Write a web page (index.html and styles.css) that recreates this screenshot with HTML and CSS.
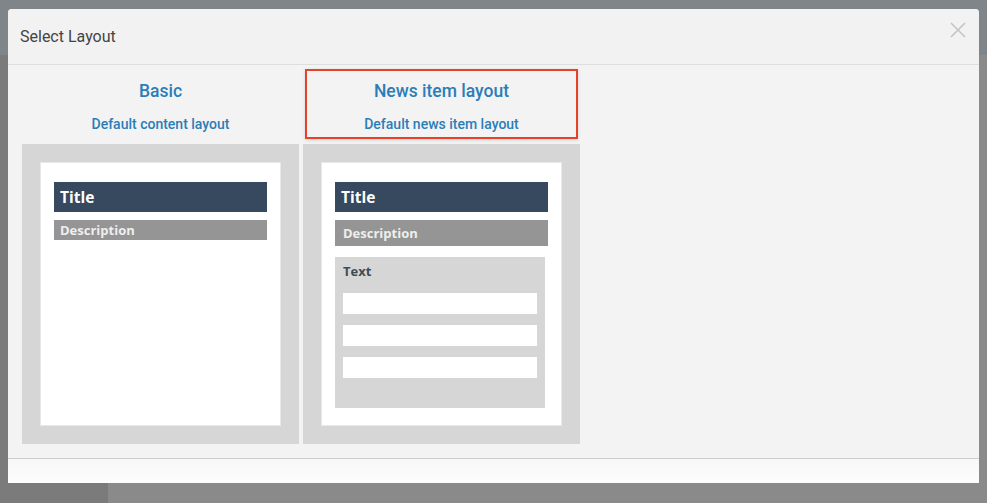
FILE: index.html
```html
<!DOCTYPE html>
<html>
  <head>
    <title>Select Layout</title>
    <meta charset="UTF-8" />
    <link rel="stylesheet" href="styles.css">
  </head>
  <body>
    <div class="backdrop">
      <div class="topbar"></div>
      <div class="sidebar"></div>
      <div class="content"></div>
    </div>

    <div class="modal">
      <div class="modal-header">
        <h3>Select Layout</h3>
        <span class="close">
          <svg width="16" height="16" viewBox="0 0 16 16">
            <path d="M1 1 L15 15 M15 1 L1 15" stroke="#c4c4c4" stroke-width="1.6" fill="none" />
          </svg>
        </span>
      </div>

      <div class="modal-body">
        <div class="layout-card">
          <div class="card-head">
            <div class="card-title">Basic</div>
            <div class="card-sub">Default content layout</div>
          </div>
          <div class="preview">
            <div class="sheet">
              <div class="bar-title">Title</div>
              <div class="bar-desc">Description</div>
            </div>
          </div>
        </div>

        <div class="layout-card">
          <div class="card-head selected">
            <div class="card-title">News item layout</div>
            <div class="card-sub">Default news item layout</div>
          </div>
          <div class="preview">
            <div class="sheet">
              <div class="bar-title">Title</div>
              <div class="bar-desc tall">Description</div>
              <div class="text-box">
                <div class="text-label">Text</div>
                <div class="field"></div>
                <div class="field"></div>
                <div class="field"></div>
              </div>
            </div>
          </div>
        </div>
      </div>

      <div class="modal-footer"></div>
    </div>
  </body>
</html>
```

FILE: styles.css
```css
html,
body {
  margin: 0;
  height: 100%;
  overflow: hidden;
}

body {
  font-family: Roboto, "Liberation Sans", sans-serif;
  background: #8a8a8a;
}

.backdrop {
  display: grid;
  grid-template-columns: 108px 1fr;
  grid-template-rows: 55px 1fr;
  height: 503px;
}

.topbar {
  grid-column: 1 / 3;
  background: #7f8588;
}

.sidebar {
  background: #7b7b7b;
}

.content {
  background: #8a8a8a;
}

.modal {
  position: absolute;
  left: 8px;
  top: 9px;
  width: 971px;
  height: 474px;
  background: #f3f3f3;
  border-radius: 4px 4px 0 0;
  display: flex;
  flex-direction: column;
}

.modal-header {
  height: 55px;
  flex: none;
  border-bottom: 1px solid #dedede;
  background: #f2f2f2;
  border-radius: 4px 4px 0 0;
  display: flex;
  align-items: center;
  justify-content: space-between;
  padding: 0 13px 0 12px;
}

.modal-header h3 {
  margin: 0 0 1px;
  font-size: 16px;
  font-weight: 400;
  color: #444;
}

.close {
  display: flex;
  margin-top: -13px;
}

.modal-body {
  height: 389px;
  flex: none;
  padding: 4px 14px 0;
  display: flex;
  gap: 4px;
  border-bottom: 1px solid #cdcdcd;
}

.layout-card {
  width: 277px;
}

.card-head {
  margin: 0 2px 5px;
  height: 70px;
  box-sizing: border-box;
  border: 2px solid transparent;
  padding-top: 10px;
  text-align: center;
  font-weight: 500;
  color: #2b7db8;
}

.card-head.selected {
  border-color: #e5412b;
  box-shadow: 0 1px 3px rgba(0, 0, 0, 0.15);
}

.card-title {
  font-size: 17.5px;
  line-height: 20px;
}

.card-sub {
  font-size: 14px;
  line-height: 16px;
  margin-top: 15px;
}

.preview {
  height: 300px;
  background: #d6d6d6;
  padding: 18px;
  box-sizing: border-box;
}

.sheet {
  height: 264px;
  background: #fff;
  border: 1px solid #e8e8e8;
  box-sizing: border-box;
  padding: 19px 13px 0;
  font-family: "Open Sans", "Noto Sans", sans-serif;
  font-weight: 700;
}

.bar-title {
  height: 30px;
  background: #36495e;
  color: #fff;
  font-size: 15.5px;
  line-height: 30px;
  padding-left: 6px;
}

.bar-desc {
  margin-top: 8px;
  height: 20px;
  background: #959595;
  color: #eee;
  font-size: 13px;
  line-height: 20px;
  padding-left: 6px;
}

.bar-desc.tall {
  height: 26px;
  line-height: 26px;
  padding-left: 8px;
}

.text-box {
  margin-top: 11px;
  margin-right: 3px;
  height: 151px;
  background: #d6d6d6;
  padding: 6px 8px 0;
  box-sizing: border-box;
}

.text-label {
  font-size: 13px;
  color: #3f4b57;
  line-height: 16px;
  margin-bottom: 14px;
}

.field {
  height: 21px;
  background: #fff;
  margin-bottom: 11px;
}

.modal-footer {
  flex: 1;
  background: linear-gradient(#f7f7f7, #fdfdfd);
}
```
